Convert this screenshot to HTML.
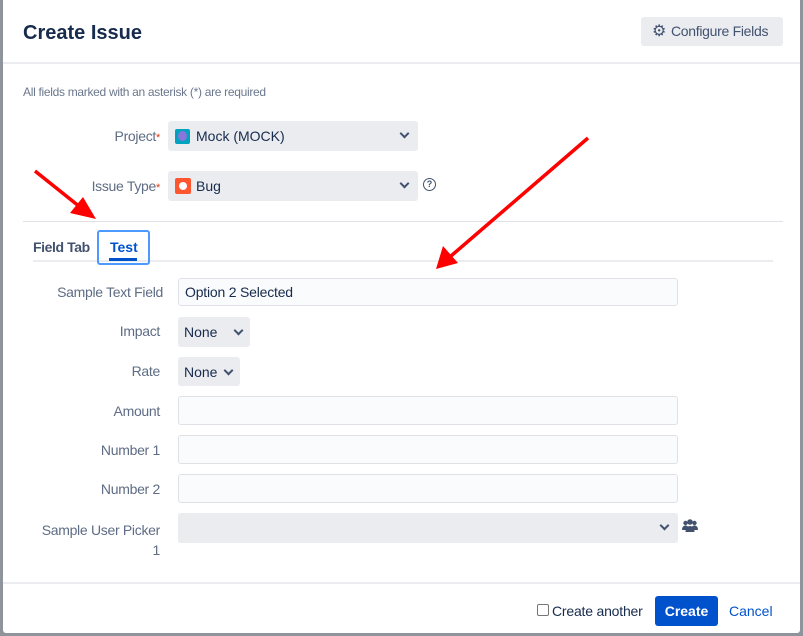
<!DOCTYPE html>
<html><head><style>
body{margin:0;width:803px;height:636px;background:#8f949c;font-family:"Liberation Sans",sans-serif;position:relative;overflow:hidden}
.dlg{position:absolute;left:3px;top:0;width:797px;height:633px;background:#fff;border-radius:0 0 3px 3px}
.a{position:absolute}
.lbl{position:absolute;font-size:14px;color:#5e6c84;text-align:right;letter-spacing:-0.3px}
.inp{position:absolute;background:#fafbfc;border:1px solid #dfe1e6;border-radius:3px;height:26px;box-sizing:border-box}
.sel{position:absolute;background:#ebecf0;border-radius:3px;font-size:14px;color:#172b4d}
.chev{position:absolute;width:5px;height:5px;border-right:2px solid #42526e;border-bottom:2px solid #42526e;transform:rotate(45deg)}
</style></head><body>
<div class="dlg">
<div class="a" style="left:20px;top:22px;font-size:20px;font-weight:bold;color:#172b4d">Create Issue</div>
<div class="a" style="left:638px;top:17px;width:142px;height:29px;background:#ebecf0;border-radius:3px;font-size:14px;color:#42526e;line-height:29px;letter-spacing:-0.3px"><span style="position:absolute;left:11px;top:0;font-size:16px">⚙</span><span style="position:absolute;left:30px">Configure Fields</span></div>
<div class="a" style="left:0;top:62px;width:797px;height:2px;background:#ebecf0"></div>
<div class="a" style="left:20px;top:85px;font-size:12px;color:#6b778c;letter-spacing:-0.3px">All fields marked with an asterisk (*) are required</div>
<div class="lbl" style="right:640px;top:128px">Project<span style="color:#de350b;font-size:11px">*</span></div>
<div class="sel" style="left:165px;top:121px;width:250px;height:30px"><div class="a" style="left:7px;top:8px;width:15px;height:15px;background:#00a3bf;border-radius:2px"><div class="a" style="left:3px;top:2px;width:9px;height:10px;background:#8777d9;border-radius:50%"></div></div><span class="a" style="left:28px;top:7px">Mock (MOCK)</span><div class="chev" style="right:10px;top:9px"></div></div>
<div class="lbl" style="right:640px;top:178px">Issue Type<span style="color:#de350b;font-size:11px">*</span></div>
<div class="sel" style="left:165px;top:171px;width:250px;height:30px"><div class="a" style="left:7px;top:7px;width:16px;height:16px;background:#ff5630;border-radius:2px"><div class="a" style="left:4px;top:4px;width:8px;height:8px;background:#fff;border-radius:50%"></div></div><span class="a" style="left:28px;top:7px">Bug</span><div class="chev" style="right:10px;top:9px"></div></div>
<div class="a" style="left:420px;top:178px;width:11px;height:11px;border:1.5px solid #42526e;border-radius:50%;font-size:9px;text-align:center;line-height:11px;color:#42526e;font-weight:bold">?</div>
<div class="a" style="left:20px;top:221px;width:760px;height:1px;background:#dfe1e6"></div>
<div class="a" style="left:30px;top:260px;width:740px;height:2px;background:#ebecf0"></div>
<div class="a" style="left:30px;top:239px;font-size:14px;font-weight:bold;color:#42526e;letter-spacing:-0.4px">Field Tab</div>
<div class="a" style="left:94px;top:230px;width:49px;height:31px;border:2px solid #4c9aff;border-radius:3px"></div>
<div class="a" style="left:107px;top:239px;font-size:14px;font-weight:bold;color:#0052cc">Test</div>
<div class="a" style="left:106px;top:258px;width:28px;height:3px;background:#0052cc"></div>
<div class="lbl" style="right:637px;top:284px">Sample Text Field</div>
<div class="inp" style="left:175px;top:278px;width:500px;height:28px;padding:5px 6px;font-size:14px;color:#172b4d;letter-spacing:-0.2px">Option 2 Selected</div>
<div class="lbl" style="right:640px;top:323px">Impact</div>
<div class="sel" style="left:175px;top:317px;width:72px;height:30px"><span class="a" style="left:6px;top:7px">None</span><div class="chev" style="left:57px;top:10px"></div></div>
<div class="lbl" style="right:640px;top:363px">Rate</div>
<div class="sel" style="left:175px;top:357px;width:62px;height:29px"><span class="a" style="left:6px;top:7px">None</span><div class="chev" style="left:47px;top:10px"></div></div>
<div class="lbl" style="right:640px;top:403px">Amount</div>
<div class="inp" style="left:175px;top:396px;width:500px;height:29px"></div>
<div class="lbl" style="right:640px;top:442px">Number 1</div>
<div class="inp" style="left:175px;top:435px;width:500px;height:29px"></div>
<div class="lbl" style="right:640px;top:481px">Number 2</div>
<div class="inp" style="left:175px;top:474px;width:500px;height:29px"></div>
<div class="lbl" style="right:640px;top:520px;line-height:20px">Sample User Picker<br>1</div>
<div class="sel" style="left:175px;top:513px;width:500px;height:30px"><div class="chev" style="right:10px;top:9px"></div></div>
<svg class="a" style="left:679px;top:519px" width="16" height="14" viewBox="0 0 16 14" fill="#42526e"><circle cx="3.5" cy="4" r="2.2"/><circle cx="12.5" cy="4" r="2.2"/><circle cx="8" cy="3" r="2.8"/><path d="M0 11c0-3 1.5-4.5 3.5-4.5S7 8 7 11z"/><path d="M9 11c0-3 1.5-4.5 3.5-4.5S16 8 16 11z"/><path d="M3.5 13c0-4 2-6 4.5-6s4.5 2 4.5 6z"/></svg>
<div class="a" style="left:0;top:582px;width:797px;height:2px;background:#ebecf0"></div>
<div class="a" style="left:534px;top:604px;width:12px;height:12px;border:1px solid #767676;border-radius:2px;box-sizing:border-box"></div>
<div class="a" style="left:549px;top:603px;font-size:14px;color:#172b4d;letter-spacing:-0.2px">Create another</div>
<div class="a" style="left:652px;top:596px;width:63px;height:30px;background:#0052cc;border-radius:3px;color:#fff;font-weight:bold;font-size:14px;text-align:center;line-height:30px">Create</div>
<div class="a" style="left:726px;top:603px;font-size:14px;color:#0052cc">Cancel</div>
</div>
<svg class="a" style="left:0;top:0" width="803" height="636"><g stroke="#f00" stroke-width="3.5" fill="#f00">
<line x1="35" y1="171" x2="80" y2="207"/><polygon points="96,219 70,213 83,197" stroke="none"/>
<line x1="588" y1="138" x2="451" y2="256"/><polygon points="436,269 443,246 458,263" stroke="none"/></g></svg>
</body></html>
